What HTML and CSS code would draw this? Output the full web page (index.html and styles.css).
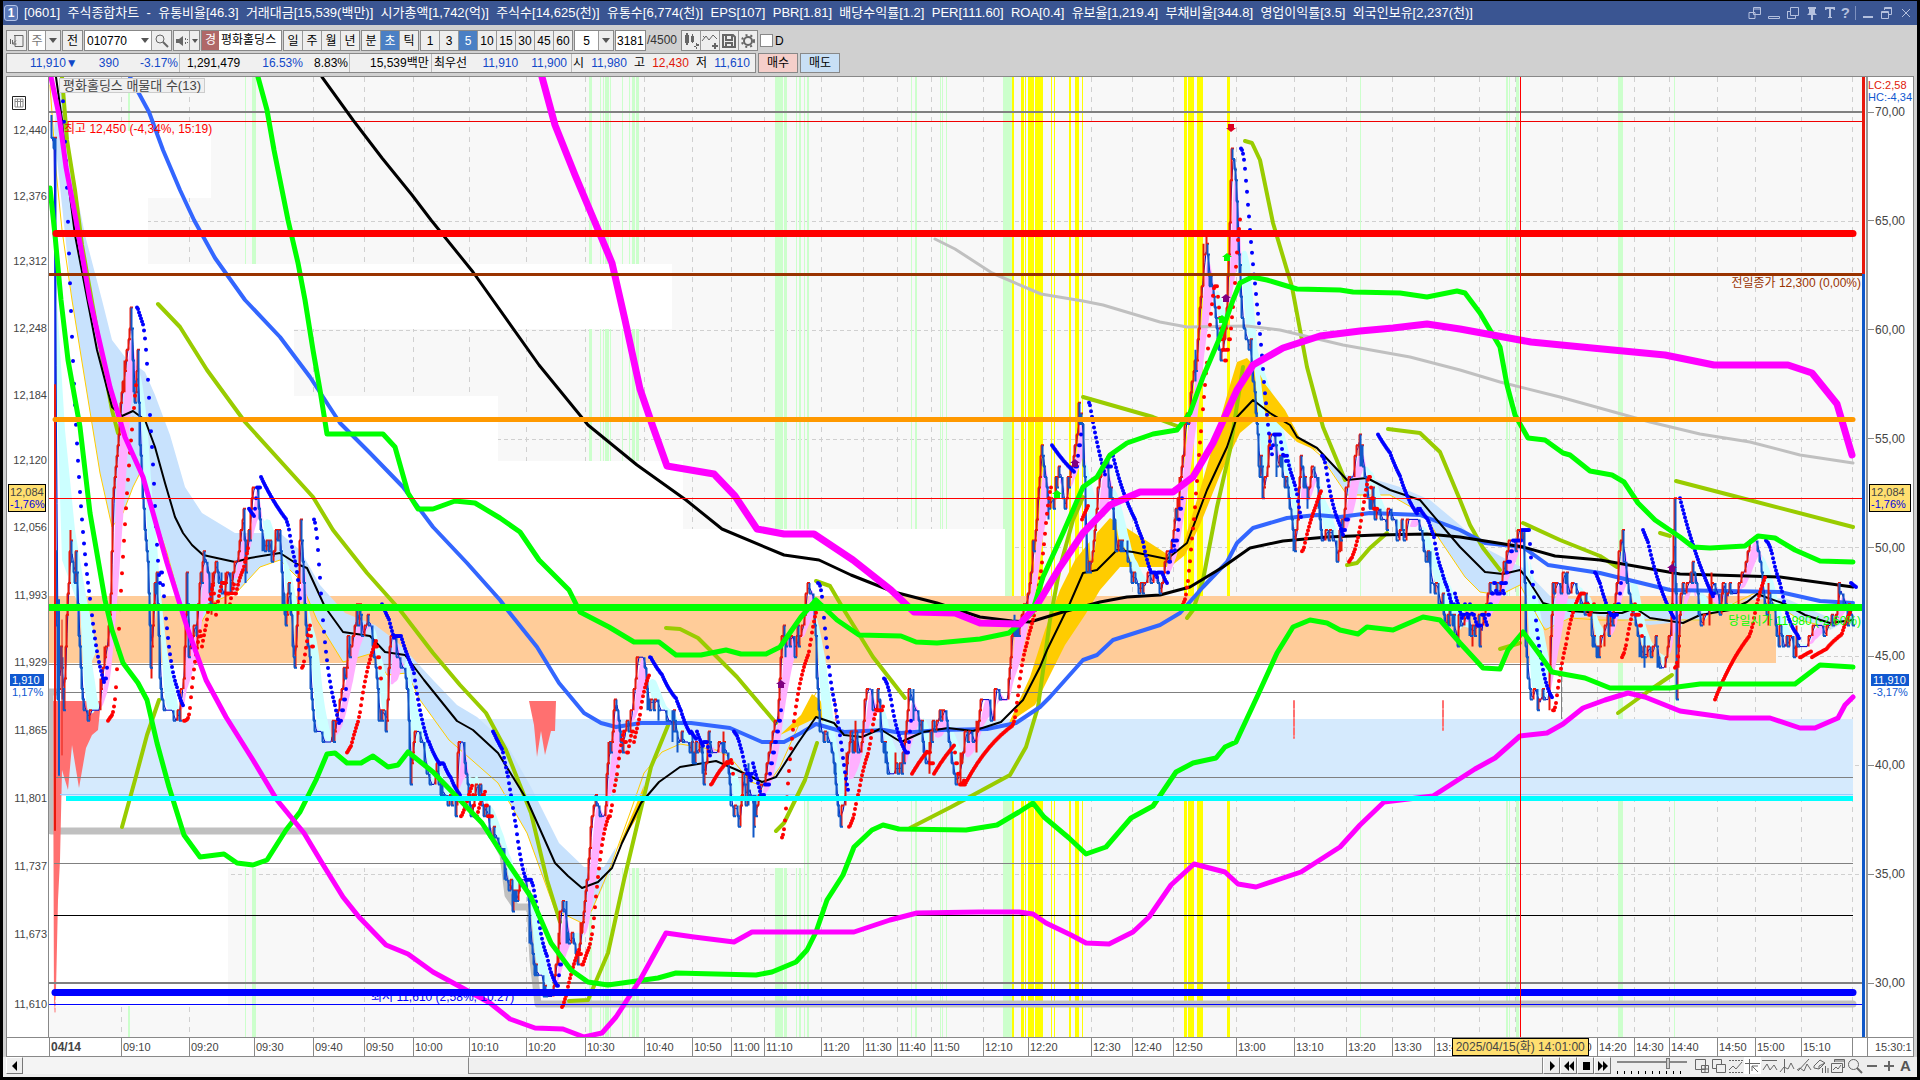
FILE: index.html
```html
<!DOCTYPE html>
<html lang="ko">
<head>
<meta charset="utf-8">
<title>[0601] 주식종합차트</title>
<link rel="stylesheet" href="styles.css">
</head>
<body>
<div class="window">
  <header class="titlebar">
    <span class="badge-one">1</span>
    <h1 class="title"><span>[0601]</span><span>주식종합차트</span><span>-</span><span>유통비율[46.3]</span><span>거래대금[15,539(백만)]</span><span>시가총액[1,742(억)]</span><span>주식수[14,625(천)]</span><span>유통수[6,774(천)]</span><span>EPS[107]</span><span>PBR[1.81]</span><span>배당수익률[1.2]</span><span>PER[111.60]</span><span>ROA[0.4]</span><span>유보율[1,219.4]</span><span>부채비율[344.8]</span><span>영업이익률[3.5]</span><span>외국인보유[2,237(천)]</span></h1>
    <div class="win-icons">
      <button aria-label="분리"><svg width="14" height="14"><path d="M5.500 1.500h7v7h-7zM5.500 3h7M1 6.500h6v6H1z"/></svg></button>
      <button aria-label="내리기"><svg width="14" height="14"><path d="M1.500 10.500h11v2h-11z"/></svg></button>
      <button aria-label="복사"><svg width="14" height="14"><path d="M4.500 1.500h8v8h-8zM1.500 5v7.500h8V10M1.500 5.500h3"/></svg></button>
      <button aria-label="고정"><svg width="14" height="14"><path class="solid" d="M3 1h8v2h-1v4l2 2H8v5H6V9H2l2-2V3H3z"/></svg></button>
      <button aria-label="글꼴"><svg width="12" height="14"><path class="solid" d="M1 1h10v3H9.500V3H7v8h1v1H4v-1h1V3H2.500v1H1z"/></svg></button>
      <button aria-label="도움말" class="help">?</button>
      <i class="sep"></i>
      <button aria-label="최소화"><svg width="14" height="14"><path class="solid" d="M2 10h10v2H2z"/></svg></button>
      <button aria-label="이전 크기"><svg width="14" height="14"><path d="M4.500 4V1.500h7v7H9M1.500 5.500h7v7h-7zM4 2.500h8M1 6.500h8"/></svg></button>
      <button aria-label="닫기"><svg width="14" height="14"><path d="M3 3l8 8M11 3l-8 8"/></svg></button>
    </div>
  </header>

  <div class="toolbar">
    <div class="group"><button class="w20" aria-label="목록"><svg width="16" height="16"><path d="M6 2.500h8v11H6zM1.500 6v5M3.500 11L7 7.500M3.500 7v4h4" /><path d="M5 2.500h9"/></svg></button></div>
    <div class="group"><button class="w18 field dim">주</button><button class="w14" aria-label="주기 선택"><i class="tri"></i></button></div>
    <div class="group"><button class="w20">전</button></div>
    <div class="group"><input class="code" aria-label="종목코드" value="010770"><button class="w14 field" aria-label="종목 열기"><i class="tri"></i></button><button class="w20" aria-label="검색"><svg width="16" height="16"><circle cx="6" cy="6" r="4"/><path class="bold" d="M9 9l5 5"/></svg></button></div>
    <div class="group"><button class="w16 soft" aria-label="소리"><svg width="14" height="14"><path class="solid" d="M1 5h3l4-3v10L4 9H1zM10 4h1v2h-1zM10 8h1v2h-1zM12 5h1v1h-1zM12 8h1v1h-1z"/></svg></button><button class="w10" aria-label="소리 메뉴"><i class="tri small"></i></button></div>
    <div class="group stock"><span class="mark">경</span><span class="name">평화홀딩스</span></div>
    <div class="group"><button>일</button><button>주</button><button>월</button><button>년</button></div>
    <div class="group"><button>분</button><button class="on">초</button><button>틱</button></div>
    <div class="group"><button>1</button><button>3</button><button class="on">5</button><button>10</button><button>15</button><button>30</button><button>45</button><button>60</button></div>
    <div class="group"><button class="w25 field">5</button><button class="w14" aria-label="간격 선택"><i class="tri"></i></button></div>
    <input class="count" aria-label="봉 개수" value="3181"><span class="total">/4500</span>
    <div class="group soft"><button aria-label="차트 추가"><svg width="18" height="18"><path class="solid" d="M3 3h4v8H3zM4 1h2v12H4zM9 4h3v6H9zM10 2h1v9h-1zM12 14h5v-2h-2v-1h-1v6h1v-2h-3z"/></svg></button><button aria-label="지표 추가"><svg width="18" height="18"><path d="M1 9l4-5 3 4 4-5 4 4M2 4l2 2"/><path class="bold" d="M14 11v6M11 14h6"/></svg></button><button aria-label="저장"><svg width="18" height="18"><path class="bold" d="M3 3h10l2 2v10H3zM6 3v5h6V3M6 15v-4h6v4"/></svg></button><button aria-label="설정"><svg width="18" height="18"><circle class="gear" cx="9" cy="9" r="6"/><circle class="bold" cx="9" cy="9" r="4"/></svg></button></div>
    <label class="check"><input type="checkbox">D</label>
  </div>

  <div class="quote">
    <div class="quote-box">
      <div class="cell c1 dn"><span>11,910▼</span><span>390</span><span>-3.17%</span></div>
      <div class="cell c2"><span>1,291,479</span><span class="dn">16.53%</span><span>8.83%</span></div>
      <div class="cell c3"><span>15,539백만</span></div>
      <div class="cell c4"><span>최우선</span><span class="dn">11,910</span><span class="dn">11,900</span></div>
      <div class="cell c5"><span>시</span><span class="dn">11,980</span><span>고</span><span class="up">12,430</span><span>저</span><span class="dn">11,610</span></div>
    </div>
    <button class="buy">매수</button><button class="sell">매도</button>
  </div>

  <main class="chart">
    <div class="axis-left">
      <button class="grid-btn" aria-label="표"><svg width="14" height="14"><path d="M.5.5h13v13H.5z"/><path class="thin" d="M3 3h8v8H3zM3 5.500h8M5.500 3v8M8.500 3v8"/></svg></button>
      <ol class="prices"><li>12,440</li><li>12,376</li><li>12,312</li><li>12,248</li><li>12,184</li><li>12,120</li><li>12,056</li><li>11,993</li><li>11,929</li><li>11,865</li><li>11,801</li><li>11,737</li><li>11,673</li><li>11,610</li></ol>
      <div class="tag cursor-tag">12,084<b>-1,76%</b></div>
      <div class="tag last-tag"><em>1,910</em><b>1,17%</b></div>
    </div>
    <svg class="plot" id="plot" viewBox="49 77 1817 960" preserveAspectRatio="none" role="img" aria-label="평화홀딩스 5초 차트"></svg>
    <div class="axis-right">
      <p class="lc">LC:2,58</p><p class="hc">HC:-4,34</p>
      <ol class="scale"><li>70,00</li><li>65,00</li><li>60,00</li><li>55,00</li><li>50,00</li><li>45,00</li><li>40,00</li><li>35,00</li><li>30,00</li></ol>
      <div class="tag cursor-tag">12,084<b>-1,76%</b></div>
      <div class="tag last-tag"><em>11,910</em><b>-3,17%</b></div>
    </div>
    <div class="legend">평화홀딩스 매물대 수(13)</div>
  </main>

  <div class="times">
    <span></span><span class="day">04/14</span><span>09:10</span><span>09:20</span><span>09:30</span><span>09:40</span><span>09:50</span><span>10:00</span><span>10:10</span><span>10:20</span><span>10:30</span><span>10:40</span><span>10:50</span><span>11:00</span><span>11:10</span><span>11:20</span><span>11:30</span><span>11:40</span><span>11:50</span><span>12:10</span><span>12:20</span><span>12:30</span><span>12:40</span><span>12:50</span><span>13:00</span><span>13:10</span><span>13:20</span><span>13:30</span><span>13:40</span><span></span><span></span><span>14:10</span><span>14:20</span><span>14:30</span><span>14:40</span><span>14:50</span><span>15:00</span><span>15:10</span><span></span><span class="end">15:30:1</span>
    <div class="time-tip">2025/04/15(화) 14:01:00</div>
  </div>

  <footer class="bottom">
    <button class="key" aria-label="왼쪽"><svg width="10" height="10"><path d="M7 0v10L2 5z"/></svg></button>
    <div class="track"></div><div class="thumb"></div>
    <button class="key" aria-label="재생"><svg width="10" height="10"><path d="M3 0v10l5-5z"/></svg></button>
    <button class="key" aria-label="뒤로"><svg width="10" height="10"><path d="M5 0v10L0 5zM10 0v10L5 5z"/></svg></button>
    <button class="key" aria-label="정지"><svg width="10" height="10"><path d="M2 1h7v8H2z"/></svg></button>
    <button class="key" aria-label="앞으로"><svg width="10" height="10"><path d="M0 0v10l5-5zM5 0v10l5-5z"/></svg></button>
    <input class="speed" type="range" min="0" max="100" value="74" aria-label="속도">
    <div class="tools">
      <button aria-label="창 추가"><svg width="16" height="16"><path d="M1.500 1.500h10v10h-10zM7.500 7.500h7v7h-7zM11 8v6M8 11h6"/></svg></button>
      <button aria-label="겹치기"><svg width="16" height="16"><path d="M1.500 1.500h9v9h-9z"/><path class="front" d="M5.500 6.500h9v8h-9z"/></svg></button>
      <button aria-label="영역"><svg width="16" height="16"><path d="M1 12l4-4 3 3 6-7"/><path stroke-dasharray="2 1" d="M1 2.500h14M1 14.500h14"/></svg></button>
      <button aria-label="십자선" class="on"><svg width="16" height="16"><path d="M4.500 1v15M0 5.500h15M7 8l6 6M7 13V8h6"/></svg></button>
      <button aria-label="추세"><svg width="16" height="16"><path d="M0 2.500h15M1 12l4-6 3 6 4-5 3 5"/></svg></button>
      <button aria-label="수직선"><svg width="16" height="16"><path d="M5.500 1v14M1 14l4-5 4 2 3-6 3 6"/></svg></button>
      <button aria-label="그리기"><svg width="16" height="16"><path d="M2 13L13 1M1 12l3-2 4 3 3-7 4 6"/></svg></button>
      <button aria-label="지우개"><svg width="16" height="16"><path d="M1 8l6-6 5 3-6 6-5-1zM6 11V8l6-3M9.500 10v5M12.500 8v7M15 10v5"/></svg></button>
      <button aria-label="저장본"><svg width="16" height="16"><path d="M4.500 4V1.500h10v8H13M1.500 5.500h11v9h-11zM3 12l3-3 2 2 3-4M5 3h9"/></svg></button>
      <button aria-label="확대경"><svg width="16" height="16"><circle cx="6.500" cy="6.500" r="5"/><path class="bold" d="M10 10l5 5"/></svg></button>
      <button aria-label="축소"><svg width="16" height="16"><path class="bold" d="M3 8h10"/></svg></button>
      <button aria-label="확대"><svg width="16" height="16"><path class="bold" d="M3 8h10M8 3v10"/></svg></button>
      <button aria-label="자동" class="auto">A</button>
    </div>
  </footer>
</div>
<script src="chart.js"></script>
</body>
</html>
```
FILE: styles.css
```css
* { box-sizing: border-box; }
body { margin: 0; background: #000; font: 12px/14px "Liberation Sans", "Noto Sans CJK KR", sans-serif; color: #000; }
button, input { font: inherit; color: inherit; margin: 0; padding: 0; border: 0; border-radius: 0; background: none; }
ol, p, h1 { margin: 0; padding: 0; list-style: none; font: inherit; }
svg { fill: none; stroke: #666; flex: none; }
.solid { fill: currentColor; stroke: none; }
.bold { stroke-width: 2; }
.soft { color: #666; }
.window { height: 100vh; min-height: 500px; border: solid #000; border-width: 1px 3px 3px; background: #d0d0d0; display: flex; flex-direction: column; }

.titlebar { flex: none; height: 24px; background: #3a5592; color: #fff; display: flex; align-items: center; padding: 0 4px 0 1px; font-size: 13px; overflow: hidden; }
.badge-one { width: 14px; height: 16px; border: 1px solid #b4c4e8; border-radius: 3px; background: #5a78b8; text-align: center; font-weight: bold; font-size: 12px; line-height: 14px; margin-right: 6px; }
.title { width: 1449px; display: flex; justify-content: space-between; white-space: nowrap; flex: 0 1 auto; }
.win-icons { margin-left: auto; display: flex; gap: 5px; align-items: center; color: #b4c0de; }
.win-icons button { display: flex; color: inherit; }
.win-icons svg { stroke: #b4c0de; }
.help { font-weight: bold; font-size: 15px; }
.sep { width: 1px; height: 14px; background: #7f92c0; }

.toolbar { flex: none; height: 28px; padding: 5px 0 2px 3px; display: flex; gap: 1px; align-items: stretch; white-space: nowrap; overflow: hidden; }
.group { display: flex; border: 1px solid #888; flex: none; background: #f4f4f4; }
.group button { width: 19px; background: #eee; border-right: 1px solid #999; display: flex; align-items: center; justify-content: center; }
.group button:last-child { border-right: 0; width: 18px; }
.group .w20, .group .w20:last-child { width: 19px; }
.group .w18 { width: 17px; }
.group .w16 { width: 16px; }
.group .w14, .group .w14:last-child { width: 14px; }
.group .w10, .group .w10:last-child { width: 9px; }
.group .w25 { width: 24px; }
.group .field { background: #fff; }
.group .dim { color: #777; }
.group .on { background: #4a7fc4; color: #fff; }
.code { width: 53px; background: #fff; padding-left: 2px; }
.tri { border: 4px solid transparent; border-top: 5px solid #555; border-bottom: 0; }
.tri.small { border-width: 3px; border-top-width: 4px; border-bottom: 0; }
.stock { width: 81px; background: #fff; overflow: hidden; }
.mark { width: 17px; background: #b06868; color: #fff; text-align: center; line-height: 18px; }
.name { padding-left: 2px; line-height: 18px; }
.count { width: 31px; background: #fff; border: 1px solid #888; padding-left: 1px; }
.total { line-height: 20px; width: 33px; color: #333; }
.gear { stroke-width: 2; stroke-dasharray: 2 3; }
.check { display: flex; align-items: center; gap: 2px; padding-left: 1px; }
.check input { appearance: none; width: 13px; height: 13px; background: #fff; border: 1px solid #888; }

.quote { flex: none; height: 20px; padding-left: 3px; display: flex; gap: 2px; }
.quote-box { width: 750px; border: 1px solid #888; background: #f0f0f0; display: flex; white-space: nowrap; }
.cell { display: flex; align-items: center; justify-content: space-between; border-right: 1px solid #bbb; }
.cell:last-child { border: 0; }
.c1 { width: 173px; padding: 0 1px 0 23px; }
.c2 { width: 170px; padding: 0 1px 0 0; justify-content: flex-end; gap: 11px; }
.c2 span:first-child { padding-right: 11px; }
.c3 { width: 82px; padding-left: 20px; }
.c4 { width: 140px; padding: 0 4px 0 2px; justify-content: flex-end; gap: 13px; }
.c4 span:first-child { margin-right: auto; }
.c5 { width: 183px; padding: 0 5px 0 1px; }
.dn { color: #1048c8; }
.up { color: #e01808; }
.buy, .sell { width: 40px; border: 1px solid #888; background: #f5cfca; }
.sell { background: #c8dff5; }

.chart { flex: 1; min-height: 0; margin: 3px 3px 0; border: 1px solid #888; border-bottom: 0; background: #fff; display: grid; grid-template-columns: 42px minmax(0, 1fr) 47px; position: relative; overflow: hidden; }
.axis-left, .axis-right { position: relative; color: #444; font-size: 11px; overflow: hidden; min-height: 0; }
.axis-left { border-right: 1px solid #888; }
.axis-right { border-left: 2px solid #999; }
.grid-btn { position: absolute; left: 5px; top: 19px; display: flex; }
.grid-btn svg { stroke: #222; }
.grid-btn .thin { stroke: #888; }
.prices { height: 100%; padding-top: 46px; display: grid; grid-template-rows: 66fr 65fr 67fr 67fr 65fr 67fr 67fr 67fr 68fr 68fr 68fr 68fr 70fr 40fr; text-align: right; padding-right: 1px; }
.scale { position: absolute; inset: 28px 0 47px 0; display: flex; flex-direction: column; justify-content: space-between; font-size: 12px; }
.scale li { display: flex; align-items: center; }
.scale li::before { content: ""; width: 6px; height: 1px; background: #888; margin-right: 1px; }
.plot { width: 100%; height: 100%; display: block; background: #f8f8f8; }
.plot text { font-size: 12px; stroke: none; }
.lc, .hc { font-size: 11px; line-height: 12px; white-space: nowrap; }
.lc { color: #e01808; padding-top: 2px; }
.hc { color: #1058d0; }
.tag { position: absolute; left: 1px; right: 2px; line-height: 12px; }
.tag b, .tag em { display: block; font: inherit; }
.cursor-tag { top: 42.400%; border: 1px solid #000; background: #ffdf70; padding: 1px; }
.cursor-tag b { color: #0000e0; }
.last-tag { top: 62.200%; color: #1058d0; padding: 0 2px; }
.last-tag em { background: #1058d0; color: #fff; overflow: hidden; padding-left: 2px; }
.last-tag b { padding-left: 2px; }
.legend { position: absolute; left: 52px; top: 1px; border: 1px solid #ccc; background: #f0f0f0; color: #444; padding: 0 3px; line-height: 13px; font-size: 13px; }

.times { flex: none; margin: 0 3px; height: 20px; border: 1px solid #888; background: #fff; color: #444; position: relative; display: grid; grid-template-columns: 42fr 72fr 68fr 65fr 59fr 51fr 49fr 56fr 57fr 59fr 59fr 48fr 39fr 33fr 57fr 42fr 34fr 34fr 52fr 45fr 63fr 41fr 41fr 63fr 58fr 52fr 46fr 42fr 45fr 36fr 47fr 35fr 37fr 35fr 48fr 38fr 46fr 51fr 15fr 46fr; font-size: 11px; }
.times span { border-left: 1px solid #888; padding-left: 1px; line-height: 18px; min-width: 0; white-space: nowrap; overflow: hidden; }
.times span:first-child { border: 0; }
.times .day { font-weight: bold; font-size: 12px; }
.times .end { padding-left: 7px; }
.time-tip { position: absolute; left: 75.800%; width: 137px; top: 0; height: 18px; border: 1px solid #000; background: #ffdf70; line-height: 16px; text-align: center; white-space: nowrap; font-size: 12px; }

.bottom { flex: none; height: 20px; padding: 0 3px 3px; background: #eee; display: flex; white-space: nowrap; }
.key { width: 17px; border: 1px solid #777; border-top-color: #fff; border-left-color: #fff; background: #eee; display: flex; align-items: center; justify-content: center; }
.key svg { fill: #000; stroke: none; }
.track { flex: 446 1 0; background: #f4f4f4; }
.thumb { flex: 1075 1 0; background: #f0f0f0; border: 1px solid #888; border-top-color: #fff; }
.speed { appearance: none; width: 70px; margin: 0 6px; height: 17px; background: repeating-linear-gradient(90deg, #000 0 1px, transparent 1px 7px) 0 14px / 100% 3px no-repeat, linear-gradient(#888, #888) 0 4px / 100% 2px no-repeat; }
.speed::-webkit-slider-thumb { appearance: none; width: 4px; height: 11px; margin-top: -5px; background: #ccc; border: 1px solid #777; }
.tools { display: flex; width: 221px; }
.tools button { width: 17px; flex: none; display: flex; align-items: center; justify-content: center; }
.tools .on { background: #fff; }
.front { fill: #eee; }
.tools .auto { font-weight: bold; font-size: 15px; color: #555; }
```
FILE: chart.js
```javascript
const NS = 'http://www.w3.org/2000/svg';
const plot = document.getElementById('plot');
function add(tag, attrs, text) {
  const el = document.createElementNS(NS, tag);
  for (const k in attrs) el.setAttribute(k, attrs[k]);
  if (text) el.textContent = text;
  plot.appendChild(el);
}
const nums = s => s.trim().split(/[ ,]+/).map(Number);
const rect = (x, y, w, h, fill) => add('rect', { x, y, width: w, height: h, fill, stroke: 'none' });
const line = (pts, color, w, extra) => add('polyline', Object.assign({ points: pts, stroke: color, 'stroke-width': w, 'stroke-linejoin': 'round', 'stroke-linecap': 'round' }, extra));
const area = (pts, fill) => add('polygon', { points: pts, fill, stroke: 'none' });
const hline = (y, x1, x2, color, w) => rect(x1, y - w / 2, x2 - x1, w, color);

/* grid */
[121,189,254,313,364,413,469,526,585,644,692,731,764,821,863,897,931,983,1028,1091,1132,1173,1236,1294,1346,1392,1434,1479,1515,1562,1597,1634,1669,1717,1755,1801,1852]
  .forEach(x => line(`${x}.5,77 ${x}.5,1037`, '#d0d0d0', 1, { 'stroke-dasharray': '5 5', 'stroke-linecap': 'butt' }));
[221, 330, 439, 547, 656, 765, 874].forEach(y => line(`49,${y}.5 1862,${y}.5`, '#d0d0d0', 1, { 'stroke-dasharray': '4 3', 'stroke-linecap': 'butt' }));

/* signal stripes: x, width */
const green = nums('128 2 245 1 252 4 589 3 600 1 603 1 605 4 610 1 622 1 629 1 632 3 636 3 775 8 784 3 796 1 799 2 804 1 807 2 911 1 915 2 940 1 942 1 946 1 1003 9 1360 1 1506 2 1509 1 1516 3 1618 5 1674 1');
const yellow = nums('1012 2 1021 3 1025 1 1028 6 1035 8 1051 1 1054 1 1069 2 1075 4 1082 1 1184 3 1188 6 1197 6 1227 3');
for (let i = 0; i < green.length; i += 2) rect(green[i], 77, green[i + 1], 960, '#ccffcc');
for (let i = 0; i < yellow.length; i += 2) rect(yellow[i], 77, yellow[i + 1], 960, '#ffff00');

/* volume-profile bands */
[[131,67,211],[198,66,148],[264,65,672],[329,67,294],[396,65,498],[461,68,683],[529,67,1005],[663,56,1561],[719,82,1561],[800,68,804],[868,138,228]]
  .forEach(b => rect(49, b[0], b[2] - 49, b[1], '#fff'));
rect(49, 596, 1727, 67, '#ffcc99');
rect(49, 719, 1804, 77, '#d5eafd');
line('57,692 50,692 51,831 490,831 503,855 508,895 516,907 530,907 533,960 538,1004 1853,1004', '#c0c0c0', 7);

/* moving-average clouds */
area('60,77 70,160 85,235 102,300 112,340 125,357 145,372 155,395 170,435 185,487 202,513 235,533 280,533 300,550 320,585 345,613 375,625 395,640 410,655 433,680 457,705 477,717 506,743 531,787 559,843 584,867 604,867 616,847 612,868 592,910 582,923 555,910 527,833 498,783 449,740 420,700 407,673 387,675 373,653 343,662 317,620 300,580 280,560 260,567 237,592 213,602 193,637 180,600 167,553 140,473 133,487 123,513 112,527 100,473 87,393 72,300 54,130', '#c8e2fd');
area('1317,448 1345,475 1367,477 1400,487 1430,500 1460,525 1485,548 1523,568 1552,598 1580,599 1620,610 1650,608 1690,610 1750,600 1785,598 1830,618 1853,618 1830,630 1800,620 1757,594 1700,620 1650,625 1600,616 1570,618 1550,630 1535,622 1520,585 1500,595 1480,592 1465,577 1440,540 1425,515 1390,495 1347,495', '#c8e2fd');
area('57,300 65,430 75,530 85,590 97,650 90,665 80,610 62,560 57,400', '#ccffff');
area('1250,325 1262,365 1280,415 1293,470 1298,500 1285,460 1265,445 1252,400', '#ccffff');
area('1420,533 1440,565 1460,605 1475,630 1460,625 1440,590', '#ccffff');
area('1530,560 1538,600 1550,665 1545,690 1535,660', '#ccffff');
area('1008,725 1030,677 1045,630 1060,590 1075,560 1095,535 1110,518 1125,527 1150,543 1170,556 1183,545 1200,490 1213,445 1230,385 1237,362 1247,358 1257,369 1265,384 1285,410 1300,438 1320,452 1297,442 1270,416 1253,422 1240,433 1220,475 1200,525 1185,555 1170,567 1120,567 1100,590 1085,615 1065,645 1050,675 1035,705 1020,715', '#ffcc00');
area('780,735 801,715 812,694 820,700 834,726 816,718', '#ffcc00');
area('618,848 636,805 644,785 640,813', '#ffcc00');
line('50,85 56,170 62,230 72,300 87,393 100,473 112,527 123,513 133,487 140,473 167,553 180,600 193,637 213,602 237,592 260,567 280,560 300,580 317,620 343,662 373,653 387,675 407,673 420,700 449,740 498,783 527,833 555,910 582,923 592,910 612,863 630,813 644,773 662,752 680,744 716,750 730,757 751,782 766,787 780,767 801,720 816,693', '#ffcc00', 1);
line('1290,430 1320,455 1347,495 1390,495 1425,515 1440,540 1465,577 1480,592 1500,595 1520,585 1545,630 1570,618 1600,620 1700,620 1757,592 1800,620 1830,628', '#ffcc00', 1);

/* sell-volume bars */
area('53,701 101,701 98,730 92,735 86,748 79,788 72,745 68,790 62,770 60,860 58,900 56,990 54,1010', '#ff7070');
area('529,701 556,701 555,731 551,731 545,755 541,731 537,757 534,725', '#ff7070');
line('1294,701 1294,738', '#ff7070', 2, { 'stroke-dasharray': '7 2' });
line('1443,701 1443,730', '#ff7070', 2, { 'stroke-dasharray': '7 2' });
line('835,701 836,720', '#ff7070', 2, { 'stroke-dasharray': '5 3' });
line('55,900 55,1012', '#ff7070', 1, { 'stroke-dasharray': '4 2' });

/* thin levels */
hline(112, 49, 1862, '#808080', 2);
hline(121.5, 49, 1862, '#f00000', 1);
hline(664.5, 49, 1561, '#808080', 1);
rect(1561, 664, 1, 55, '#808080');
hline(692.5, 54, 1853, '#808080', 1);
hline(777.5, 54, 1853, '#808080', 1);
hline(794.5, 60, 1853, '#99ccff', 1);
hline(863.5, 54, 1853, '#808080', 1);
hline(915.5, 54, 1853, '#000', 1);
hline(983, 49, 1862, '#808080', 2);

/* intraday price swings */
const swings = nums(`50 115 54 140 55 560 57 700 60 640 63 700 67 590 70 540 75 570 82 690 90 715 100 700 106 650 110 600 112 500 118 440 122 385 128 330 130 306 134 400 137 350 140 470 147 560 150 680 156 560 160 700 165 715 178 712 182 700 186 580 188 650 195 640 203 540 210 590 216 560 222 580 236 570 243 510 245 570 252 505 256 500 262 545 272 560 279 520 284 630 288 570 294 660 300 530 304 620 310 680 315 735 322 738 333 725 345 665 350 640 357 610 362 620 370 610 378 715 385 725 390 645 398 650 407 690 410 785 414 740 420 745 432 775 440 785 455 800 458 735 463 745 470 800 480 790 490 830 500 855 510 895 525 895 531 940 536 990 552 992 560 915 570 935 577 970 584 900 590 830 596 795 604 815 611 725 614 695 622 740 632 715 636 655 642 650 650 700 665 705 675 725 685 745 700 755 702 780 708 735 715 745 728 765 730 810 740 815 742 780 750 800 755 825 764 780 770 745 777 715 780 650 784 630 788 640 795 650 800 625 806 600 811 585 815 650 819 735 825 745 833 770 838 820 844 800 850 740 860 740 866 700 876 700 884 740 890 785 903 760 908 705 916 705 925 755 935 730 945 695 950 740 955 770 965 735 975 735 980 700 990 705 1000 695 1007 690 1012 620 1018 630 1026 590 1034 540 1041 445 1048 510 1058 480 1065 500 1078 410 1083 450 1086 590 1092 560 1098 480 1105 450 1115 540 1125 565 1138 580 1150 575 1160 590 1165 560 1173 525 1183 440 1195 370 1203 265 1206 255 1215 310 1222 365 1228 260 1231 145 1236 200 1241 320 1250 350 1256 435 1262 485 1270 440 1285 470 1294 555 1300 470 1307 500 1312 470 1322 530 1337 555 1345 500 1360 445 1370 500 1380 520 1400 525 1420 530 1432 580 1445 610 1457 630 1467 620 1480 635 1487 600 1500 590 1508 535 1515 550 1523 530 1525 640 1530 695 1548 700 1552 595 1563 580 1575 595 1590 620 1598 655 1610 620 1622 540 1630 600 1645 660 1655 630 1662 675 1670 640 1674 490 1676 685 1680 600 1690 570 1700 610 1712 595 1725 600 1740 590 1750 545 1757 550 1765 600 1785 645 1803 655 1815 630 1830 635 1837 595 1845 615 1853 625`);
let seed = 7;
const rnd = () => (seed = (seed * 16807) % 2147483647) / 2147483647;
const TICK = 10.6;
const snap = v => Math.round(v / TICK) * TICK;
const bars = [];
let j = 0, prev = 115, offset = 0;
for (let x = 51; x < 1853; x++) {
  while (swings[j + 2] < x) j += 2;
  const t = (x - swings[j]) / (swings[j + 2] - swings[j]);
  if (rnd() < .4) offset = (rnd() - .5) * 30;
  const c = snap(swings[j + 1] + t * (swings[j + 3] - swings[j + 1]) + offset);
  const reach = rnd() < .12 ? TICK : 0;
  bars.push({ x, o: prev, c, hi: Math.min(prev, c) - (rnd() < .5 ? reach : 0), lo: Math.max(prev, c) + (rnd() < .5 ? reach : 0) });
  prev = c;
}
const mean = (i, n) => { let s = 0, k = 0; for (let q = Math.max(0, i - n); q <= i; q++) { s += bars[q].c; k++; } return s / k; };
let pink = '', cyan = '';
for (let i = 26; i < bars.length - 1; i++) {
  const a = mean(i, 6), b = mean(i, 20), a2 = mean(i + 1, 6), b2 = mean(i + 1, 20), x = bars[i].x;
  const d = `M${x} ${a}L${x + 1} ${a2}V${b2}L${x} ${b}z`;
  if (a < b) pink += d; else cyan += d;
}
add('path', { d: cyan, fill: '#ccffff', stroke: 'none' });
add('path', { d: pink, fill: '#ffb0ff', stroke: 'none' });

/* slow averages */
const olive = '#99cc00';
['62,77 67,140 75,190 82,245 97,330 112,410 118,433','158,304 180,327 207,370 245,422 313,497 333,530 367,573 400,610 433,653 460,685 486,713 506,750 531,813 547,880 560,922','122,827 135,780 147,735 159,700','569,1001 588,1000 608,953 624,880 640,813 651,767 669,723','666,628 680,629 698,638 737,677 776,723','776,831 784,823 805,780 817,743','816,581 830,586 844,610 873,657 905,698','910,828 951,807 1010,775 1026,747 1038,707 1050,620 1060,567 1073,520 1083,497','1083,397 1153,417 1177,426','1187,618 1193,610 1203,580 1217,507 1230,450 1243,367','1245,141 1252,143 1260,160 1273,223 1292,287 1307,367 1323,427 1345,480','1347,565 1357,563 1370,548 1387,533','1388,429 1420,433 1440,452 1460,500 1470,525 1483,548 1500,570','1523,523 1560,540 1600,556 1617,567','1676,481 1730,495 1853,527','1618,713 1650,690 1672,675','1500,649 1520,643','1660,533 1670,536']
  .forEach(p => line(p, olive, 4));
line('935,239 955,249 992,273 1041,294 1083,301 1103,305 1160,322 1187,327 1247,326 1280,330 1343,345 1410,357 1460,370 1500,382 1560,397 1650,422 1700,434 1750,442 1800,455 1853,463', '#c0c0c0', 3);
line('130,77 149,112 163,150 180,190 194,220 215,258 245,300 280,337 310,377 340,423 370,453 403,487 433,527 467,563 500,600 509,612 537,647 559,683 584,713 601,723 616,727 641,723 691,723 730,728 762,742 784,742 801,733 816,724 844,732 884,730 901,733 941,730 987,729 1016,723 1040,707 1050,697 1083,660 1097,655 1113,640 1160,625 1180,613 1203,587 1227,562 1237,543 1253,528 1287,518 1317,515 1340,517 1370,513 1420,515 1460,530 1485,543 1523,547 1548,565 1600,573 1670,590 1780,592 1820,601 1853,603', '#3366ff', 4);
line('322,77 353,120 382,158 412,195 431,220 473,272 539,365 588,425 637,465 686,500 722,529 784,555 819,560 851,575 894,592 937,603 980,617 1012,621 1030,622 1063,612 1100,602 1127,597 1160,595 1190,587 1223,567 1250,548 1283,541 1327,537 1377,535 1427,534 1460,537 1523,547 1555,556 1600,560 1680,574 1780,577 1853,587', '#000', 3);
line('56,77 62,120 66,165 75,235 97,350 112,407 122,416 133,411 145,420 155,447 165,483 175,517 183,533 192,545 203,555 235,562 250,558 280,553 297,564 307,568 325,607 343,632 370,636 385,652 405,655 424,680 457,721 473,730 498,753 527,800 555,863 568,876 582,888 598,882 612,868 622,843 641,803 659,782 680,767 716,761 737,770 762,782 776,777 798,743 816,717 834,723 844,735 862,737 880,729 901,742 923,732 948,728 973,731 1001,722 1023,700 1040,667 1047,650 1070,603 1083,573 1097,570 1117,550 1133,552 1167,559 1187,543 1207,490 1227,447 1237,417 1253,400 1270,413 1290,425 1297,437 1317,448 1347,480 1367,478 1390,490 1420,500 1460,547 1485,572 1503,574 1520,570 1527,578 1543,603 1570,611 1600,613 1622,613 1635,608 1650,618 1683,623 1700,615 1730,610 1747,602 1757,594 1785,604 1805,615 1830,623 1853,620', '#000', 2);

/* candles */
const ink = { red: '', blue: '' };
bars.forEach(b => {
  const d = `M${b.x}.5 ${b.hi}V${b.lo}`;
  if (b.c < b.o) ink.red += d + `M${b.x} ${b.c}h3`;
  else if (b.c > b.o) ink.blue += d + `M${b.x} ${b.c}h3`;
});
line(bars.map((b, i) => `${b.x},${mean(i, 3)}`).join(' '), '#0000c8', 1);
add('path', { d: ink.red, stroke: '#e8180c', 'stroke-width': 2 });
add('path', { d: ink.blue, stroke: '#1058c8', 'stroke-width': 2 });
line('55,150 55,690', '#0000ff', 1);
line('55,385 55,830', '#e8180c', 2);
line('59,600 59,775', '#1058c8', 2);
line('62,620 62,755', '#e8180c', 1);

/* parabolic SAR on screen coordinates (smaller y is a higher price) */
let rising = false, sar = 100, ep = 160, af = .02;
const dots = { red: '', blue: '' };
for (let i = 8; i < bars.length; i++) {
  const b = bars[i], p = bars[i - 1];
  sar += af * (ep - sar);
  if (rising) {
    sar = Math.max(sar, p.lo);
    if (b.lo > sar + 14) { rising = false; sar = ep; ep = b.lo; af = .02; }
    else if (b.hi < ep) { ep = b.hi; af = Math.min(.12, af + .015); }
  } else {
    sar = Math.min(sar, p.hi);
    if (b.hi < sar - 14) { rising = true; sar = ep; ep = b.hi; af = .02; }
    else if (b.lo > ep) { ep = b.lo; af = Math.min(.12, af + .015); }
  }
  dots[rising ? 'red' : 'blue'] += `M${b.x + 4} ${sar}h.01`;
}
add('path', { d: dots.red, stroke: '#ff0000', 'stroke-width': 4, 'stroke-linecap': 'round' });
add('path', { d: dots.blue, stroke: '#0000ff', 'stroke-width': 4, 'stroke-linecap': 'round' });

/* envelopes */
const lime = '#00ff00', magenta = '#ff00ff';
line('258,77 267,110 274,150 288,220 298,263 305,300 313,350 320,390 327,434 383,434 395,447 408,493 418,509 433,509 455,501 475,503 500,518 520,532 539,560 569,590 580,612 609,627 634,642 659,642 676,655 701,655 726,650 741,654 766,654 780,647 801,617 816,600 837,620 859,635 901,636 916,642 937,643 980,639 1009,633 1032,613 1043,577 1063,533 1083,487 1097,477 1110,455 1127,443 1153,434 1177,430 1190,413 1203,377 1220,337 1233,300 1240,283 1252,277 1267,280 1297,289 1340,290 1353,292 1400,293 1427,297 1457,291 1465,293 1480,313 1500,347 1507,385 1515,415 1528,438 1545,440 1563,453 1570,455 1590,471 1612,475 1624,482 1638,503 1655,520 1680,537 1693,547 1710,548 1745,546 1758,536 1775,538 1795,550 1820,561 1853,562', lime, 5);
line('50,188 55,235 61,300 68,360 80,427 90,513 105,600 112,630 123,663 138,683 147,700 157,743 169,787 184,835 200,857 224,854 237,863 253,865 267,860 286,830 300,812 316,780 327,754 335,753 347,763 361,763 373,756 388,767 398,765 408,752 433,772 457,797 482,823 506,860 531,897 551,943 571,970 588,982 608,985 658,978 676,973 756,975 772,972 796,962 807,950 816,932 827,900 843,875 854,847 872,830 883,825 899,829 966,830 997,825 1019,812 1033,803 1044,817 1069,838 1086,854 1106,847 1131,818 1153,806 1176,772 1193,763 1216,758 1225,747 1236,742 1257,697 1277,653 1293,627 1310,620 1327,623 1340,630 1358,634 1367,627 1393,630 1423,617 1440,620 1460,643 1483,668 1500,669 1508,650 1523,632 1540,655 1552,672 1585,678 1610,688 1670,688 1700,684 1795,684 1820,665 1853,667', lime, 5);
line('51,77 59,115 66,167 76,220 90,300 110,387 125,437 143,477 167,563 187,627 206,680 226,717 253,760 277,800 304,833 322,863 343,897 359,917 386,945 408,954 433,972 457,985 490,1003 510,1019 535,1028 563,1029 584,1037 602,1033 616,1017 640,980 666,933 694,937 734,942 752,932 854,932 890,920 917,913 979,912 1019,912 1033,914 1046,923 1071,935 1086,943 1109,944 1133,932 1149,917 1171,885 1194,864 1225,872 1238,884 1256,887 1283,878 1301,872 1340,847 1360,825 1384,802 1433,796 1475,769 1495,758 1520,736 1547,733 1563,724 1583,708 1605,700 1628,693 1645,697 1680,711 1730,718 1770,718 1800,728 1815,728 1838,718 1845,705 1853,697', magenta, 5);
line('542,77 555,125 575,175 594,220 612,263 625,320 640,389 653,427 667,466 714,474 735,496 757,529 784,534 814,534 853,560 891,590 914,612 955,613 980,623 1020,624 1037,605 1060,567 1083,533 1110,505 1140,492 1173,492 1193,477 1213,443 1237,390 1253,365 1283,348 1320,336 1360,331 1393,328 1427,324 1460,329 1531,342 1592,348 1665,355 1714,365 1788,365 1812,373 1837,404 1852,455', magenta, 7);

/* key levels */
add('text', { x: 371, y: 1001, fill: '#0000ff' }, '최저 11,610 (2,58%, 10:27)');
line('56,233.5 1853,233.5', '#ff0000', 7);
hline(274.5, 49, 1862, '#993300', 3);
line('55,419.5 1853,419.5', '#ff9900', 5);
hline(607.5, 49, 1862, lime, 7);
line('66,798.5 1853,798.5', '#00ffff', 5, { 'stroke-linecap': 'butt' });
line('55,992.5 1853,992.5', '#0000ff', 7);
hline(1004.5, 49, 1862, '#0000ff', 1);
add('text', { x: 64, y: 133, fill: '#ff0000' }, '최고 12,450 (-4,34%, 15:19)');
add('text', { x: 1861, y: 287, fill: '#993300', 'text-anchor': 'end' }, '전일종가 12,300 (0,00%)');
add('text', { x: 1861, y: 625, fill: lime, 'text-anchor': 'end' }, '당일시가 11,980 (-2,60%)');

/* buy and sell marks */
const mark = (x, y, fill, dir) => area(`${x},${y - 4 * dir} ${x + 5},${y} ${x + 3},${y} ${x + 3},${y + 4 * dir} ${x - 3},${y + 4 * dir} ${x - 3},${y} ${x - 5},${y}`, fill);
mark(1231, 128, '#dd0022', -1);
[[1227,257],[1222,319],[1057,494]].forEach(p => mark(p[0], p[1], lime, 1));
[[1226,298],[781,684],[1075,463],[1672,568]].forEach(p => mark(p[0], p[1], '#800080', 1));

/* cross hair and session bar */
hline(498.5, 49, 1862, '#ff0000', 1);
rect(1520, 77, 1, 960, '#ff0000');
rect(1862, 77, 3, 197, '#e8180c');
rect(1862, 274, 3, 763, '#1058c8');
```
